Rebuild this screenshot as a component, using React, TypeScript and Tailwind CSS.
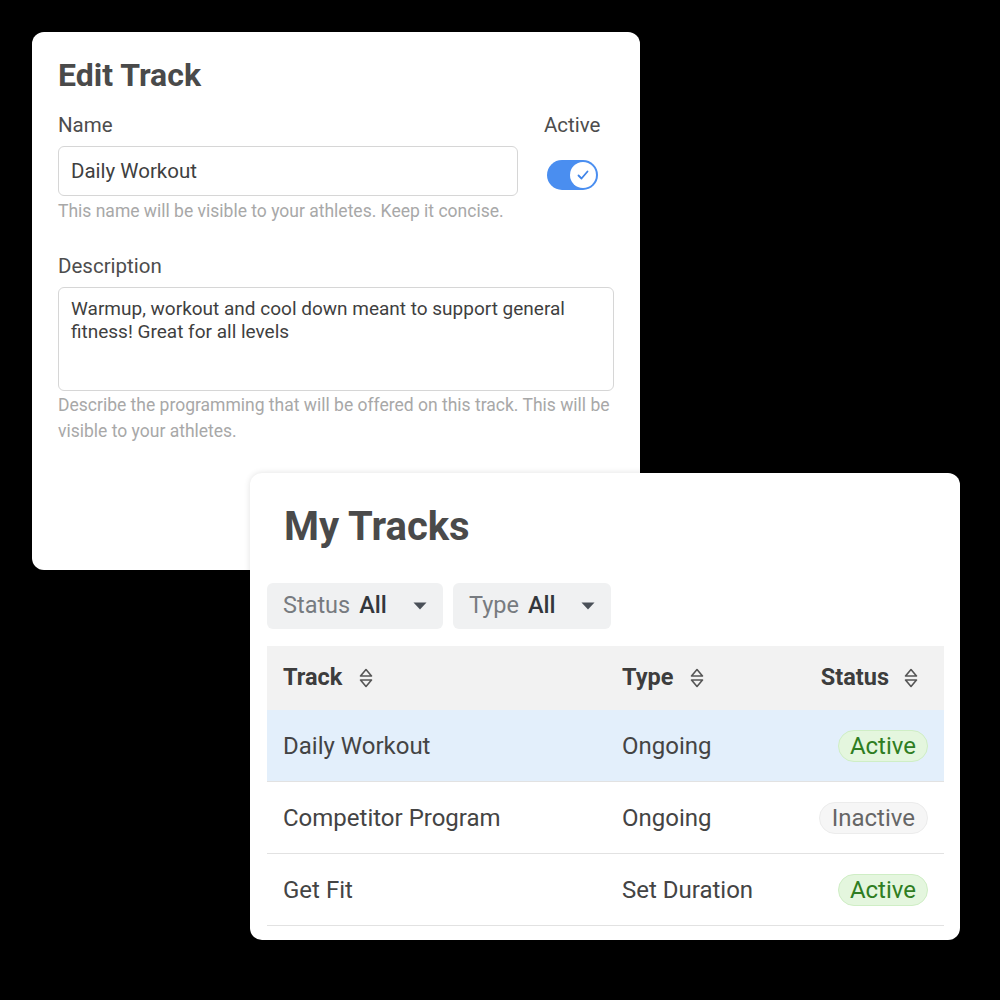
import React from "react"

const tracks = [
  { name: "Daily Workout", type: "Ongoing", active: true, selected: true },
  { name: "Competitor Program", type: "Ongoing", active: false, selected: false },
  { name: "Get Fit", type: "Set Duration", active: true, selected: false },
]

function SortIcon() {
  return (
    <svg width="16" height="22" viewBox="0 0 16 22" fill="none" stroke="#555" strokeWidth="1.6" strokeLinejoin="round">
      <path d="M8 2.5 L13.5 9 H2.5 Z" />
      <path d="M2.5 13 H13.5 L8 19.5 Z" />
    </svg>
  )
}

function Caret() {
  return (
    <svg width="14" height="8" viewBox="0 0 14 8">
      <path d="M0.5 0.5 H13.5 L7 7.5 Z" fill="#4a5058" />
    </svg>
  )
}

function Toggle() {
  return (
    <div className="w-[51px] h-[30px] rounded-full bg-[#4a8ef0] flex items-center justify-end pr-[2px]">
      <div className="w-[26px] h-[26px] rounded-full bg-white flex items-center justify-center">
        <svg width="14" height="14" viewBox="0 0 14 14" fill="none" stroke="#3f84e8" strokeWidth="1.8" strokeLinecap="round" strokeLinejoin="round">
          <path d="M2.5 7.5 L5.5 10.5 L11.5 3.5" />
        </svg>
      </div>
    </div>
  )
}

function Badge({ active }: { active: boolean }) {
  return active ? (
    <span className="inline-block rounded-full bg-[#e4f6de] border border-[#cfeec5] text-[#2f7d22] text-[24px] leading-[30px] px-[11px]">
      Active
    </span>
  ) : (
    <span className="inline-block rounded-full bg-[#f6f6f6] border border-[#ececec] text-[#666] text-[24px] leading-[30px] px-[12px]">
      Inactive
    </span>
  )
}

export default function App() {
  return (
    <div className="relative w-[1000px] h-[1000px] bg-black pt-[32px] pl-[32px] font-['Roboto',sans-serif]">
      {/* Edit Track card */}
      <div className="w-[608px] h-[538px] bg-white rounded-[12px] pl-[26px] pr-[26px] pt-[24px]">
        <h2 className="text-[32px] leading-[38px] font-bold text-[#4a4a4a]">Edit Track</h2>

        <div className="flex mt-[18px]">
          <div className="w-[460px]">
            <div className="text-[20.5px] leading-[26px] text-[#4d4d4d]">Name</div>
            <div className="mt-[8px] h-[50px] border border-[#d6d6d6] rounded-[6px] px-[12px] flex items-center text-[20.5px] text-[#3f3f3f]">
              Daily Workout
            </div>
            <div className="mt-[3px] text-[17.5px] leading-[24px] text-[#a8a8a8] whitespace-nowrap">
              This name will be visible to your athletes. Keep it concise.
            </div>
          </div>
          <div className="ml-[26px] flex flex-col items-start">
            <div className="text-[20.5px] leading-[26px] text-[#4d4d4d]">Active</div>
            <div className="mt-[22px] ml-[3px]">
              <Toggle />
            </div>
          </div>
        </div>

        <div className="mt-[30px] text-[20.5px] leading-[26px] text-[#4d4d4d]">Description</div>
        <div className="mt-[8px] w-[556px] h-[104px] border border-[#d6d6d6] rounded-[6px] px-[12px] pt-[9px] text-[19px] leading-[23px] text-[#3f3f3f]">
          Warmup, workout and cool down meant to support general fitness! Great for all levels
        </div>
        <div className="mt-[1px] w-[560px] text-[17.5px] leading-[26px] text-[#a8a8a8]">
          Describe the programming that will be offered on this track. This will be visible to your athletes.
        </div>
      </div>

      {/* My Tracks card */}
      <div className="absolute left-[250px] top-[473px] w-[710px] h-[467px] bg-white rounded-[12px] shadow-[0_0_6px_rgba(0,0,0,0.12)] pl-[17px] pr-[16px] pt-[30px]">
        <h2 className="pl-[17px] text-[40px] leading-[48px] font-bold text-[#4a4a4a]">My Tracks</h2>

        <div className="mt-[32px] flex gap-[10px]">
          <div className="h-[46px] w-[176px] rounded-[6px] bg-[#f0f1f2] pl-[16px] pr-[16px] flex items-center text-[23.5px]">
            <span className="text-[#777b80]">Status</span>
            <span className="ml-[9px] font-medium text-[#33373c]">All</span>
            <span className="ml-auto flex"><Caret /></span>
          </div>
          <div className="h-[46px] w-[158px] rounded-[6px] bg-[#f0f1f2] pl-[16px] pr-[16px] flex items-center text-[23.5px]">
            <span className="text-[#777b80]">Type</span>
            <span className="ml-[9px] font-medium text-[#33373c]">All</span>
            <span className="ml-auto flex"><Caret /></span>
          </div>
        </div>

        <div className="mt-[17px]">
          <div className="grid grid-cols-[339px_1fr_auto] items-center h-[64px] bg-[#f2f2f2] px-[16px] text-[23.5px] font-bold text-[#3d3d3d]">
            <div className="flex items-center gap-[16px]">Track <SortIcon /></div>
            <div className="flex items-center gap-[16px]">Type <SortIcon /></div>
            <div className="flex items-center gap-[14px] mr-[9px]">Status <SortIcon /></div>
          </div>
          {tracks.map((t, i) => (
            <div
              key={i}
              className={
                "grid grid-cols-[339px_1fr_auto] items-center h-[72px] px-[16px] text-[24px] text-[#444] border-b border-[#e2e2e2] " +
                (t.selected ? "bg-[#e3effb]" : "bg-white")
              }
            >
              <div>{t.name}</div>
              <div>{t.type}</div>
              <div className="justify-self-end">
                <Badge active={t.active} />
              </div>
            </div>
          ))}
        </div>
      </div>
    </div>
  )
}
